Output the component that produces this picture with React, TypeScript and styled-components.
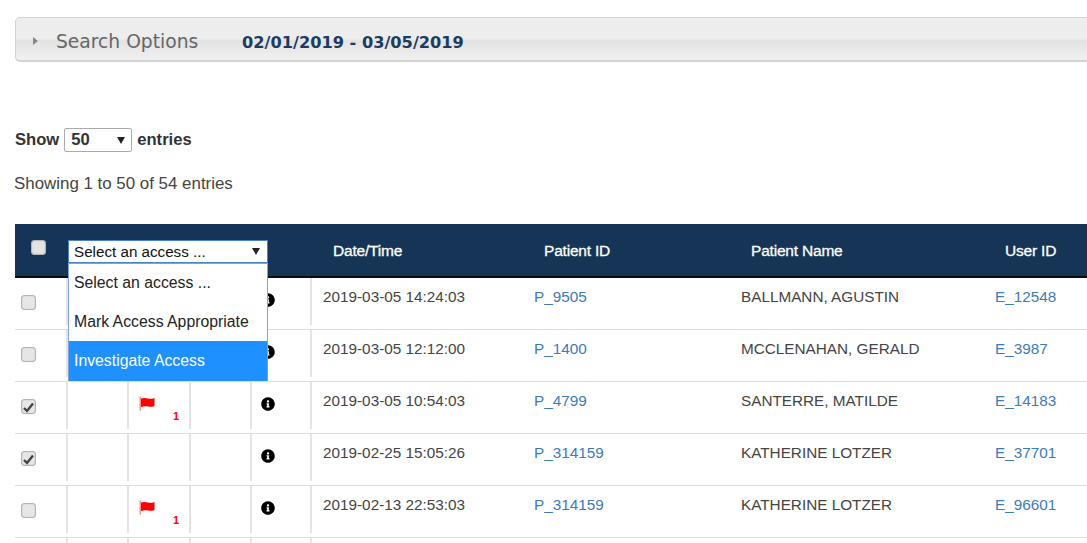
import React from "react";
import styled, { createGlobalStyle } from "styled-components";
import { FaInfoCircle } from "react-icons/fa";

const GlobalStyle = createGlobalStyle`
  html, body {
    margin: 0;
    padding: 0;
    background: #fff;
    overflow: hidden;
  }
  * { box-sizing: border-box; }
`;

const Page = styled.div`
  width: 1087px;
  height: 543px;
  overflow: hidden;
  padding: 17px 0 0 15px;
  font-family: "Liberation Sans", Arial, sans-serif;
  color: #333;
`;

const SearchPanel = styled.div`
  width: 1100px;
  height: 45px;
  display: flex;
  align-items: center;
  padding-left: 17px;
  border: 1px solid #d2d2d2;
  border-bottom-width: 2px;
  border-radius: 5px;
  background: linear-gradient(#eeeeee 0%, #ededed 50%, #e3e3e3 54%, #f0f0f0 100%);
`;

const Caret = styled.span`
  width: 0;
  height: 0;
  border-left: 5px solid #888;
  border-top: 4px solid transparent;
  border-bottom: 4px solid transparent;
  margin: 3px 18px 0 0;
`;

const PanelTitle = styled.span`
  font-family: "DejaVu Sans", Verdana, sans-serif;
  font-size: 18.7px;
  line-height: 22px;
  padding-top: 5px;
  color: #666;
  width: 186px;
`;

const DateRange = styled.span`
  font-family: "DejaVu Sans", Verdana, sans-serif;
  font-size: 16.2px;
  font-weight: 700;
  line-height: 22px;
  padding-top: 7px;
  color: #1d3b5f;
`;

const LengthRow = styled.div`
  display: flex;
  align-items: center;
  gap: 5px;
  margin-top: 66px;
  font-size: 16.6px;
  font-weight: 700;
  color: #333;
`;

const LengthSelect = styled.div`
  width: 68px;
  height: 24px;
  display: flex;
  align-items: center;
  justify-content: space-between;
  padding: 0 6px;
  border: 1px solid #aaa;
  border-radius: 2px;
  background: #fff;
`;

const Arrow = styled.span`
  width: 0;
  height: 0;
  border-left: 4px solid transparent;
  border-right: 4px solid transparent;
  border-top: 7px solid #222;
`;

const Info = styled.div`
  margin: 23px 0 0 -1px;
  font-size: 16.9px;
  line-height: 18px;
  color: #444;
`;

const Table = styled.div`
  width: 1100px;
  margin-top: 31px;
`;

const columns = "51px 61px 62px 61px 60px 211px 207px 254px 1fr";

const HeaderRow = styled.div`
  height: 54px;
  display: grid;
  grid-template-columns: ${columns};
  background: #163556;
  border-bottom: 2px solid #0c0c0c;
  color: #fff;
  font-size: 15.5px;
  letter-spacing: -0.2px;
  -webkit-text-stroke: 0.3px #fff;
`;

const HeaderCell = styled.div`
  padding: 17px 0 0 23px;
  line-height: 19px;
`;

const HeaderCheckCell = styled.div`
  padding: 16px 0 0 16px;
`;

const AccessCell = styled.div`
  grid-column: span 4;
  position: relative;
  padding: 16px 0 0 2px;
`;

const AccessSelect = styled.div`
  width: 200px;
  height: 23px;
  display: flex;
  align-items: center;
  justify-content: space-between;
  padding: 0 7px 0 5px;
  background: #fff;
  border: 1px solid #4d83c9;
  color: #111;
  font-size: 15.2px;
  letter-spacing: 0;
  -webkit-text-stroke: 0;
`;

const AccessMenu = styled.ul`
  position: absolute;
  z-index: 2;
  top: 39px;
  left: 2px;
  width: 200px;
  height: 118px;
  margin: 0;
  padding: 0;
  list-style: none;
  background: #fff;
  border: 1px solid #7da3da;
  color: #222;
  font-size: 15.8px;
  letter-spacing: 0;
  -webkit-text-stroke: 0;
`;

const AccessOption = styled.li<{ $active?: boolean }>`
  height: ${(p) => (p.$active ? "40px" : "38.5px")};
  display: flex;
  align-items: center;
  padding-left: 5px;
  background: ${(p) => (p.$active ? "#1e90ff" : "transparent")};
  color: ${(p) => (p.$active ? "#fff" : "inherit")};
`;

const Row = styled.div`
  height: 52px;
  display: grid;
  grid-template-columns: ${columns};
  border-bottom: 1px solid #dedede;
  padding-bottom: 4px;
`;

const IconCell = styled.div<{ $first?: boolean }>`
  position: relative;
  border-left: ${(p) => (p.$first ? "0" : "2px solid #e4e4e4")};
`;

const CheckCell = styled(IconCell)`
  padding: 17px 0 0 6px;
`;

const InfoCell = styled(IconCell)`
  padding: 15px 0 0 9px;
  font-size: 14px;
  color: #000;
  line-height: 14px;
`;

const FlagCell = styled(IconCell)`
  padding: 14px 0 0 10px;
  line-height: 14px;
`;

const FlagCount = styled.span`
  position: absolute;
  left: 44px;
  top: 28px;
  font-size: 11px;
  font-weight: 700;
  line-height: 12px;
  color: #f00;
`;

const TextCell = styled.div`
  padding: 10px 0 0 13px;
  font-size: 15.3px;
  line-height: 18px;
  color: #444;
  white-space: nowrap;
`;

const DateCell = styled(TextCell)`
  border-left: 2px solid #e4e4e4;
  padding-left: 11px;
`;

const IdLink = styled.a`
  color: #3d7ab8;
  text-decoration: none;
`;

const Check = styled.span<{ $header?: boolean }>`
  display: block;
  width: 15px;
  height: 15px;
  border: 1px solid #b4b4b4;
  border-radius: 3px;
  background: ${(p) => (p.$header ? "#e3e3e3" : "#e6e6e6")};
  box-shadow: inset 0 0 1px #999;
`;

const CheckBox = ({ checked, header }: { checked?: boolean; header?: boolean }) => (
  <Check $header={header}>
    {checked && (
      <svg width="13" height="13" viewBox="0 0 13 13">
        <path d="M2 7 L5 10 L11 2.5" fill="none" stroke="#444" strokeWidth="2.4" />
      </svg>
    )}
  </Check>
);

const FlagIcon = () => (
  <svg width="17" height="15" viewBox="0 0 17 15">
    <path d="M0.500 0.500h1.500v14H0.500z" fill="#ff8a8a" />
    <path d="M2 2.500C5 1.500 7 2 9 2.500s4 .5 6.500-.5V10c-2.500 1-4.500 1-6.500.5s-4-.5-7 .5z" fill="#f00" />
  </svg>
);

const rows = [
  { checked: false, flag: false, date: "2019-03-05 14:24:03", patient: "P_9505", name: "BALLMANN, AGUSTIN", user: "E_12548" },
  { checked: false, flag: false, date: "2019-03-05 12:12:00", patient: "P_1400", name: "MCCLENAHAN, GERALD", user: "E_3987" },
  { checked: true, flag: true, date: "2019-03-05 10:54:03", patient: "P_4799", name: "SANTERRE, MATILDE", user: "E_14183" },
  { checked: true, flag: false, date: "2019-02-25 15:05:26", patient: "P_314159", name: "KATHERINE LOTZER", user: "E_37701" },
  { checked: false, flag: true, date: "2019-02-13 22:53:03", patient: "P_314159", name: "KATHERINE LOTZER", user: "E_96601" },
];

const App = () => {
  return (
    <Page>
      <GlobalStyle />
      <SearchPanel>
        <Caret />
        <PanelTitle>Search Options</PanelTitle>
        <DateRange>02/01/2019 - 03/05/2019</DateRange>
      </SearchPanel>

      <LengthRow>
        Show
        <LengthSelect>
          50
          <Arrow />
        </LengthSelect>
        entries
      </LengthRow>
      <Info>Showing 1 to 50 of 54 entries</Info>

      <Table>
        <HeaderRow>
          <HeaderCheckCell>
            <CheckBox header />
          </HeaderCheckCell>
          <AccessCell>
            <AccessSelect>
              Select an access ...
              <Arrow />
            </AccessSelect>
            <AccessMenu>
              <AccessOption>Select an access ...</AccessOption>
              <AccessOption>Mark Access Appropriate</AccessOption>
              <AccessOption $active>Investigate Access</AccessOption>
            </AccessMenu>
          </AccessCell>
          <HeaderCell>Date/Time</HeaderCell>
          <HeaderCell>Patient ID</HeaderCell>
          <HeaderCell>Patient Name</HeaderCell>
          <HeaderCell>User ID</HeaderCell>
        </HeaderRow>

        {rows.map((row, index) => (
          <Row key={index}>
            <CheckCell $first>
              <CheckBox checked={row.checked} />
            </CheckCell>
            <IconCell />
            <FlagCell>
              {row.flag && (
                <>
                  <FlagIcon />
                  <FlagCount>1</FlagCount>
                </>
              )}
            </FlagCell>
            <IconCell />
            <InfoCell>
              <FaInfoCircle />
            </InfoCell>
            <DateCell>{row.date}</DateCell>
            <TextCell>
              <IdLink href="#">{row.patient}</IdLink>
            </TextCell>
            <TextCell>{row.name}</TextCell>
            <TextCell>
              <IdLink href="#">{row.user}</IdLink>
            </TextCell>
          </Row>
        ))}
        <Row>
          <IconCell $first />
          <IconCell />
          <IconCell />
          <IconCell />
          <IconCell />
          <DateCell />
        </Row>
      </Table>
    </Page>
  );
};

export default App;
